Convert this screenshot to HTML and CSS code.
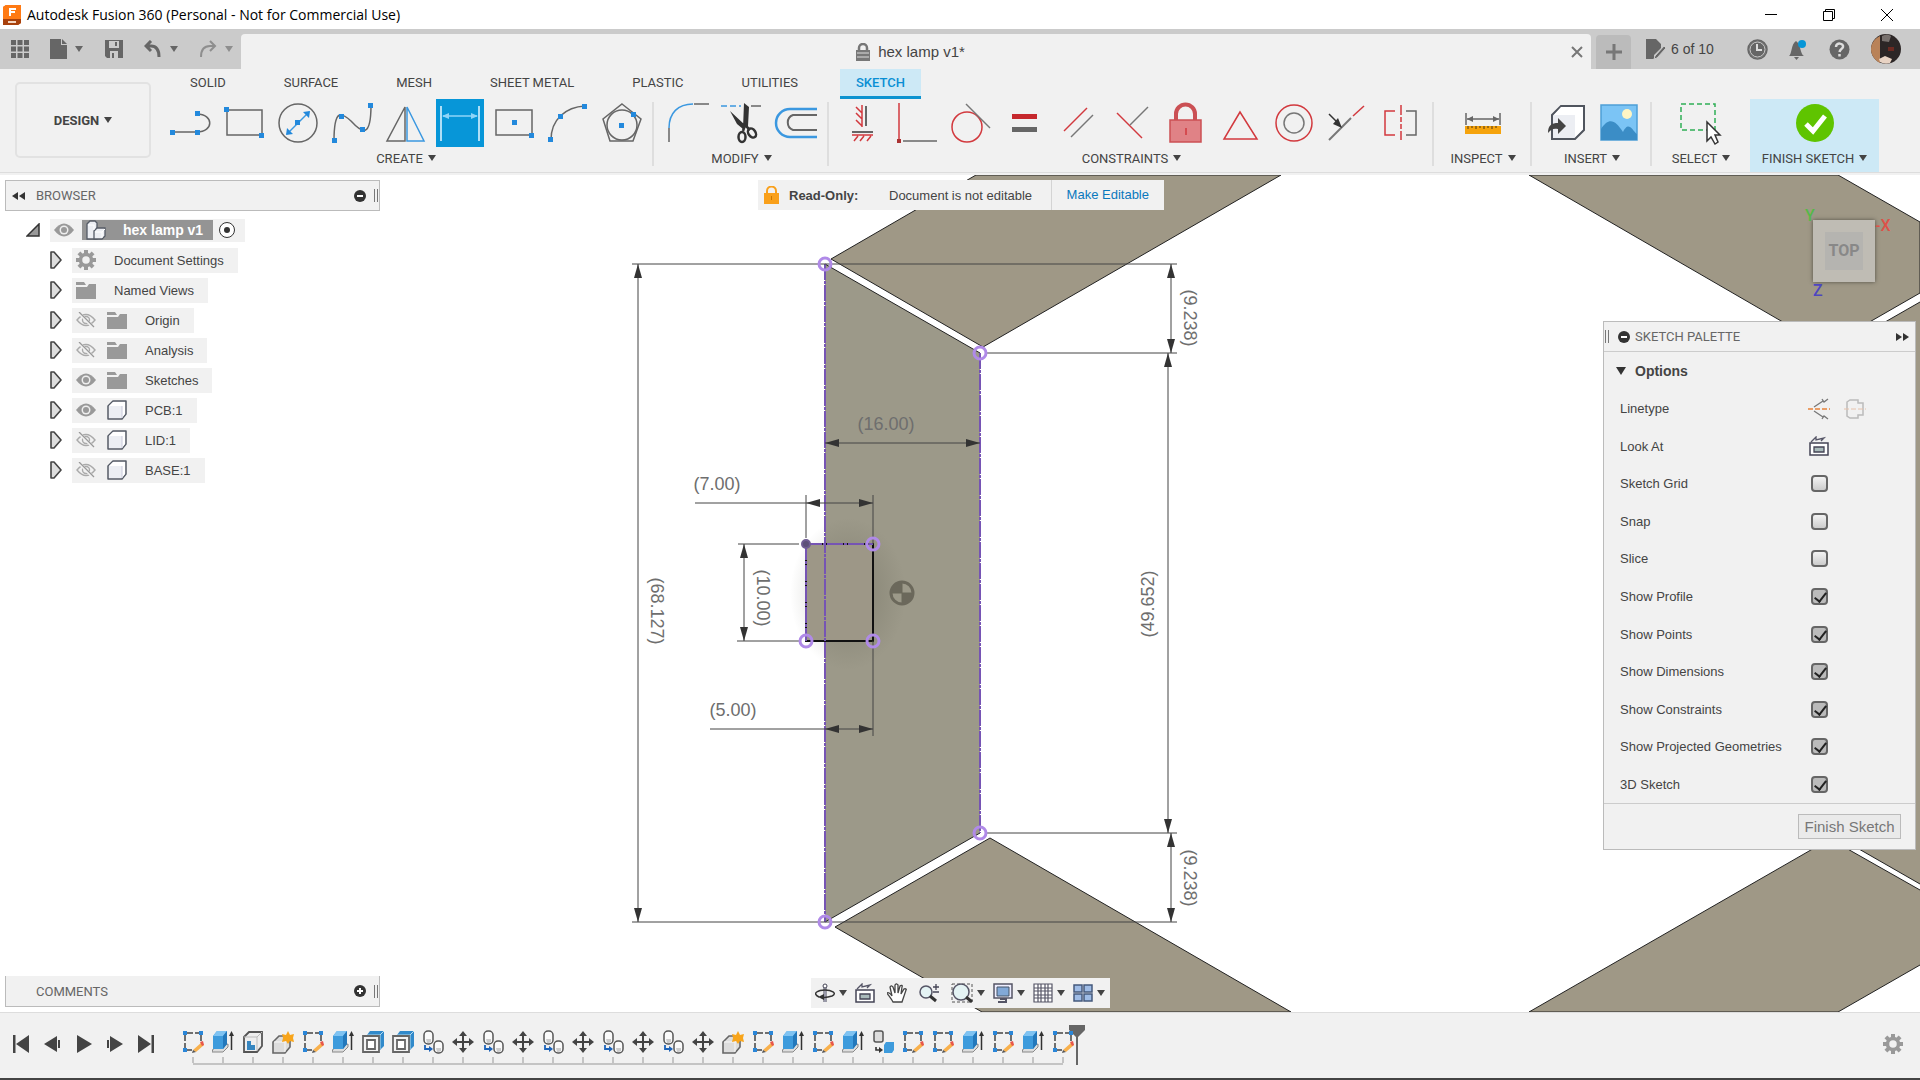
FILE: index.html
```
<!DOCTYPE html>
<html lang="en">
<head>
  <meta charset="utf-8">
  <meta name="viewport" content="width=device-width, initial-scale=1">
  <title>Autodesk Fusion 360</title>
  <link rel="stylesheet" href="styles.css">
</head>
<body>
  <!-- shared icons -->
  <svg class="defs" aria-hidden="true">
    <symbol id="eye" viewBox="0 0 20 16"><path d="M0 8Q10-5 20 8Q10 21 0 8Z" fill="#999"/><circle cx="10" cy="8" r="4.5" fill="#eee"/><circle cx="10" cy="8" r="3" fill="#999"/></symbol>
    <symbol id="eye-off" viewBox="0 0 20 16"><path d="M1 8Q10-3 19 8Q10 19 1 8Z" fill="none" stroke="#aaa" stroke-width="1.4"/><circle cx="10" cy="8" r="3.5" fill="none" stroke="#aaa" stroke-width="1.4"/><path d="M2 0L18 16" stroke="#f1f1f1" stroke-width="3"/><path d="M3 0L18 15" stroke="#999" stroke-width="1.3"/></symbol>
    <symbol id="folder" viewBox="0 0 20 17"><path d="M0 0h8l2 3H0zM0 5h11l2-3h7v15H0z" fill="#999"/></symbol>
    <symbol id="body" viewBox="0 0 20 20"><path d="M1 6l5-5h13v13l-4 5H1z" fill="#eceef3" stroke="#555b66" stroke-width="1.5" stroke-linejoin="round"/><path d="M15 6v12l3-4V2zM2 6h13l3-4H6z" fill="#fff"/><path d="M15 6v12" stroke="#ccd" /></symbol>
    <symbol id="expand" viewBox="0 0 12 18"><path d="M1 1h3l7 8-7 8H1z" fill="#ddd" stroke="#444" stroke-width="1.6" stroke-linejoin="round"/></symbol>
    <symbol id="gear" viewBox="0 0 20 20"><g fill="#999"><path d="M8 0h4v20H8z"/><path d="M8 0h4v20H8z" transform="rotate(45 10 10)"/><path d="M8 0h4v20H8z" transform="rotate(90 10 10)"/><path d="M8 0h4v20H8z" transform="rotate(135 10 10)"/></g><circle cx="10" cy="10" r="5.5" fill="#f1f1f1" stroke="#999" stroke-width="3.5"/></symbol>
    <symbol id="look" viewBox="0 0 20 20"><path d="M1 7h18v12H1z" fill="#fff" stroke="#445" stroke-width="1.5"/><path d="M5 11h10v5H5z" fill="#abb" stroke="#445" stroke-width="1.3"/><path d="M2 6l5-5v3l8-2-3 3" fill="none" stroke="#556" stroke-width="1.3"/></symbol>
    <symbol id="sketch" viewBox="0 0 22 24"><path d="M3 3h16M3 3v17M19 3v9M3 20h7" fill="none" stroke="#444" stroke-width="1.5" stroke-dasharray="8 2"/><path d="M1 1h4v4H1zM17 1h4v4h-4zM1 18h4v4H1z" fill="#2a86d8"/><path d="M20 12l2 3-8 7-3-2z" fill="#f8b04c"/><path d="M18 12l3-1 1 4-2 1z" fill="#e8564a"/><path d="M11 20l3 2-4 1z" fill="#555"/></symbol>
    <symbol id="extrude" viewBox="0 0 22 24"><path d="M1 19l-1 3h11l5-5v-3z" fill="#ddd" stroke="#888"/><path d="M1 6l4-5h10v13l-4 5H1z" fill="#3e9bdc"/><path d="M1 6h10l4-5H5z" fill="#7fc3f2"/><path d="M11 6l4-5v13l-4 5z" fill="#2378bb"/><path d="M19.500 20V5" stroke="#333" stroke-width="1.5"/><path d="M17 6l2.500-5L22 6z" fill="#333"/></symbol>
    <symbol id="cutbox" viewBox="0 0 22 24"><path d="M2 7l5-5h13v14l-5 6H2z" fill="#eee" stroke="#555" stroke-width="1.8"/><path d="M2 7h13v14M15 7l5-5" fill="none" stroke="#bbb"/><path d="M5 11h4v4h4v5H5z" fill="#3686c0"/></symbol>
    <symbol id="newbody" viewBox="0 0 22 24"><path d="M1 12l6-6h6l5 4v7l-5 6H1z" fill="#ddd" stroke="#666" stroke-width="1.6"/><path d="M2 12h11l5-2M13 12v10" fill="none" stroke="#f8f8f8"/><path d="M16 1l2 4 4-1-1 4 1 4-4-1-2 3-2-3-4 1 1-4-1-4 4 1z" fill="#f8a51b"/></symbol>
    <symbol id="shell" viewBox="0 0 22 24"><path d="M5 5l3-4h14v15l-4 4z" fill="#318acb"/><path d="M5 5h13v14M18 5l4-4" fill="none" stroke="#bde" /><path d="M1 6h16v16H1z" fill="#f3f3f3" stroke="#666" stroke-width="1.8"/><path d="M5 10h8v9H5z" fill="#fff" stroke="#666" stroke-width="1.8"/></symbol>
    <symbol id="copy" viewBox="0 0 22 24"><g fill="#fafafa" stroke="#555" stroke-width="1.5"><rect x="2" y="1" width="9" height="13" rx="4"/><rect x="12" y="11" width="9" height="12" rx="4"/></g><path d="M4 9h5v3l-2 1H5zM14 18h5v3l-2 1h-2z" fill="#ccc"/><path d="M3 15v4h5" fill="none" stroke="#1d63b8" stroke-width="1.8"/><path d="M7 16l4 3-4 3z" fill="#1d63b8"/></symbol>
    <symbol id="copyblue" viewBox="0 0 22 24"><rect x="2" y="1" width="9" height="11" rx="2" fill="#ddd" stroke="#555" stroke-width="1.5"/><path d="M12 15l2-3h8v8l-2 3h-8z" fill="#3e9bdc"/><path d="M4 17v3h3" fill="none" stroke="#333" stroke-width="1.6"/><path d="M7 17l4 3-4 3z" fill="#333"/></symbol>
    <symbol id="move" viewBox="0 0 22 24"><path d="M11 3v18M2 12h18" stroke="#444" stroke-width="2"/><path d="M11 1l4 5H7zM11 23l4-5H7zM0 12l5-4v8zM22 12l-5-4v8z" fill="#444"/></symbol>
  </svg>

  <header class="titlebar">
    <svg class="app-icon" width="18" height="20" viewBox="0 0 18 20"><path d="M0 2l3-2h15v18l-3 2H0z" fill="#f0660c"/><path d="M0 2l3-2h15v14H0z" fill="#ff7a14"/><path d="M0 14h18v4l-3 2H0z" fill="#a8410c"/><path d="M7 11V4h6M7 7h5" fill="none" stroke="#fff" stroke-width="2"/><path d="M5 17h8" stroke="#f5d6c0" stroke-width="2"/></svg>
    <h1>Autodesk Fusion 360 (Personal - Not for Commercial Use)</h1>
    <div class="window-buttons">
      <button aria-label="Minimize"><svg width="14" height="14"><path d="M1 6.500h12" stroke="#000"/></svg></button>
      <button aria-label="Restore"><svg width="14" height="14"><path d="M1.500 3.500h9v9h-9zM3.500 3V1.500h9v9H11" fill="none" stroke="#000"/></svg></button>
      <button aria-label="Close"><svg width="14" height="14"><path d="M1 1l12 12M13 1L1 13" stroke="#000"/></svg></button>
    </div>
  </header>

  <div class="docbar">
    <div class="quick">
      <button aria-label="Data panel"><svg width="18" height="18" viewBox="0 0 18 18"><path d="M0 0h5v5H0zM6.500 0h5v5h-5zM13 0h5v5h-5zM0 6.500h5v5H0zM6.500 6.500h5v5h-5zM13 6.500h5v5h-5zM0 13h5v5H0zM6.500 13h5v5h-5zM13 13h5v5h-5z" fill="#666"/></svg></button>
      <button aria-label="File"><svg width="17" height="20" viewBox="0 0 17 20"><path d="M0 0h11v6h6v14H0z" fill="#666"/><path d="M12 0l5 5h-5z" fill="#666"/></svg><i class="caret"></i></button>
      <button aria-label="Save"><svg width="18" height="18" viewBox="0 0 18 18"><path d="M0 0h18v18H2l-2-2z" fill="#666"/><path d="M4 1h10v7H4zM5 11h8v7H5z" fill="#cbcbcb"/><path d="M10 2h2v4h-2zM7 13h2v5H7z" fill="#666"/></svg></button>
      <button aria-label="Undo"><svg width="18" height="18" viewBox="0 0 18 18"><path d="M7 1L2 6l5 5M2 6h5c6 0 8 4 8 11" fill="none" stroke="#666" stroke-width="3"/></svg><i class="caret"></i></button>
      <button class="faded" aria-label="Redo"><svg width="18" height="18" viewBox="0 0 18 18"><path d="M11 1l5 5-5 5M16 6h-5C5 6 2 10 2 17" fill="none" stroke="#666" stroke-width="2"/></svg><i class="caret"></i></button>
    </div>
    <div class="doc-tab">
      <span class="doc-name"><svg width="16" height="18" viewBox="0 0 16 18"><path d="M4 8V5a4 4 0 0 1 8 0v3" fill="none" stroke="#777" stroke-width="2.500"/><path d="M1 7h14v11H1z" fill="#777"/><path d="M2 10h12M2 14h12" stroke="#ddd"/></svg>hex lamp v1*</span>
      <button aria-label="Close document"><svg width="12" height="12"><path d="M1 1l10 10M11 1L1 11" stroke="#777" stroke-width="2"/></svg></button>
    </div>
    <button class="new-tab" aria-label="New document"><svg width="16" height="16"><path d="M8 0v16M0 8h16" stroke="#777" stroke-width="3"/></svg></button>
    <div class="account">
      <button class="docs-left"><svg width="20" height="20" viewBox="0 0 20 20"><path d="M0 0h10l5 5v4l-7 7v4H0z" fill="#666"/><path d="M18 7l2 2-9 10-3 1 1-3z" fill="#666" stroke="#cbcbcb"/></svg>6 of 10</button>
      <button aria-label="Job status"><svg width="21" height="21" viewBox="0 0 21 21"><circle cx="10.500" cy="10.500" r="8.500" fill="#666" stroke="#666"/><circle cx="10.500" cy="10.500" r="7.500" fill="none" stroke="#ccc"/><circle cx="10.500" cy="10.500" r="9.500" fill="none" stroke="#666" stroke-width="1.500"/><path d="M10 5v6h5" fill="none" stroke="#ddd" stroke-width="2"/></svg></button>
      <button aria-label="Notifications"><svg width="20" height="21" viewBox="0 0 20 21"><path d="M1 17c3-2 2-12 7-15 5 3 4 13 8 15z" fill="#666"/><path d="M6 18h5l-2.500 3z" fill="#666"/><circle cx="14" cy="5" r="4" fill="#0696d7"/></svg></button>
      <button aria-label="Help"><svg width="21" height="21" viewBox="0 0 21 21"><circle cx="10.500" cy="10.500" r="10" fill="#666"/><path d="M7 8c0-5 8-4 7 0-.5 2-3 2-3.500 5M10.500 15v2.500" fill="none" stroke="#ddd" stroke-width="2.500"/></svg></button>
      <button class="avatar" aria-label="Account"><svg width="30" height="30" viewBox="0 0 30 30"><circle cx="15" cy="15" r="15" fill="#2c2626"/><path d="M9 2C-3 8-3 22 9 29z" fill="#b98258"/><path d="M8 25l6-3 7 3-2 4q-5 2-10-1z" fill="#e8d3c4"/><path d="M11 2q5-3 9 0l-2 6-7-1z" fill="#78716e"/><path d="M17 13h6v4h-6z" fill="#6b2a22"/></svg></button>
    </div>
  </div>

  <div class="ribbon">
    <div class="workspace"><button>DESIGN<i class="caret"></i></button></div>
    <div class="ribbon-main">
      <nav class="tabs">
        <a href="#">SOLID</a>
        <a href="#">SURFACE</a>
        <a href="#">MESH</a>
        <a href="#">SHEET METAL</a>
        <a href="#">PLASTIC</a>
        <a href="#">UTILITIES</a>
        <a href="#" class="active">SKETCH</a>
      </nav>
      <div class="groups">
        <section class="group create">
          <div class="tools">
            <button aria-label="Line"><svg class="ico" viewBox="0 0 48 48"><path d="M6 33h25c17 0 17-18 0-18"/><path class="dot" d="M4 31h5v5H4zM29 31h5v5h-5zM29 12h5v5h-5z"/></svg></button>
            <button aria-label="Rectangle"><svg class="ico" viewBox="0 0 48 48"><path d="M7 11h35v25H7z"/><path class="dot" d="M4 8h5v5H4zM39 34h5v5h-5z"/></svg></button>
            <button aria-label="Circle"><svg class="ico" viewBox="0 0 48 48"><circle cx="24" cy="24" r="19"/><path class="blue" d="M13 35l22-22"/><path class="dot" d="M21 21h5v5h-5zM12 36l1-7 6 6zM36 12l-1 7-6-6z"/></svg></button>
            <button aria-label="Spline"><svg class="ico" viewBox="0 0 48 48"><path d="M6 42C6 8 14 14 23 22C34 34 43 40 43 6"/><path class="dot" d="M4 39h5v5H4zM11 15h5v5h-5zM32 28h5v5h-5zM40 4h5v5h-5z"/></svg></button>
            <button aria-label="Mirror"><svg class="ico" viewBox="0 0 48 48"><path d="M23 8v34H5z"/><path class="blue" d="M25 8v34h17z"/></svg></button>
            <button class="on" aria-label="Sketch Dimension"><svg class="ico" viewBox="0 0 48 48"><path class="white" d="M5 7v35M43 7v35"/><path class="sky" d="M7 17h34"/><path class="skyfill" d="M6 17l7-3v6zM42 17l-7-3v6z"/></svg></button>
            <button aria-label="Center Rectangle"><svg class="ico" viewBox="0 0 48 48"><path d="M6 11h36v25H6z"/><path class="dot" d="M22 21h5v5h-5zM39 34h5v5h-5z"/></svg></button>
            <button aria-label="Arc"><svg class="ico" viewBox="0 0 48 48"><path d="M7 41C7 20 22 8 41 7"/><path class="dot" d="M4 38h5v5H4zM14 15h5v5h-5zM38 5h5v5h-5z"/></svg></button>
            <button aria-label="Polygon"><svg class="ico" viewBox="0 0 48 48"><path d="M24 5l19 15-8 22H12L5 20z"/><circle cx="24" cy="26" r="15"/><path class="dot" d="M21 24h5v5h-5zM33 13h5v5h-5z"/></svg></button>
          </div>
          <button class="menu">CREATE<i class="caret"></i></button>
        </section>
        <section class="group modify">
          <div class="tools">
            <button aria-label="Fillet"><svg class="ico" viewBox="0 0 48 48"><path d="M5 43V29M30 5h15"/><path class="blue" d="M5 29C5 14 14 5 29 5"/></svg></button>
            <button aria-label="Trim"><svg class="ico" viewBox="0 0 48 48"><path class="blue" stroke-dasharray="6 3" d="M3 7h20"/><path d="M33 7h10"/><path d="M26 4l5 4-1 19-5 2zM12 12l15 14-2 4-6-5z" fill="#333" stroke="none"/><g stroke="#333" stroke-width="2.500"><path d="M27 26l-2 6M27 26l5 5"/><ellipse cx="24" cy="38" rx="3.500" ry="5"/><ellipse cx="34" cy="34" rx="3.500" ry="5" transform="rotate(-35 34 34)"/></g></svg></button>
            <button aria-label="Offset"><svg class="ico" viewBox="0 0 48 48"><path class="blue" stroke-width="2.500" d="M45 10H18a14 14 0 0 0 0 28h27"/><path stroke-width="2" d="M45 16H21a8 8 0 0 0 0 15h24"/></svg></button>
          </div>
          <button class="menu">MODIFY<i class="caret"></i></button>
        </section>
        <section class="group constraints">
          <div class="tools">
            <button aria-label="Horizontal/Vertical"><svg class="ico" viewBox="0 0 48 48"><path stroke-width="2" d="M28 7v20M14 33h21"/><path class="red" d="M24 6v22M18 8l6 6M18 14l6 6M18 21l6 6M14 36h21M16 42l4-5M22 42l4-5M29 42l4-5"/></svg></button>
            <button aria-label="Coincident"><svg class="ico" viewBox="0 0 48 48"><path d="M11 42h34"/><path class="red" d="M7 4v38"/><path d="M5 40h4v4H5z" fill="#a33" stroke="none"/></svg></button>
            <button aria-label="Tangent"><svg class="ico" viewBox="0 0 48 48"><circle class="red" cx="21" cy="28" r="15"/><path class="grey" d="M20 5l24 24"/></svg></button>
            <button aria-label="Equal"><svg class="ico" viewBox="0 0 48 48"><path d="M12 15h25v5H12z" fill="#c6282d" stroke="none"/><path d="M12 28h25v5H12z" fill="#666" stroke="none"/></svg></button>
            <button aria-label="Parallel"><svg class="ico" viewBox="0 0 48 48"><path class="red" d="M10 32L33 9"/><path class="grey" d="M17 38l22-22"/></svg></button>
            <button aria-label="Perpendicular"><svg class="ico" viewBox="0 0 48 48"><path class="red" d="M9 14l25 25"/><path class="grey" d="M22 26L40 8"/></svg></button>
            <button aria-label="Fix"><svg class="ico" viewBox="0 0 48 48"><path class="shackle" d="M14 21v-6a9 9 0 0 1 19 0v6"/><path d="M8 21h31v22H8z" fill="#e08286" stroke="#cb5054"/><path class="red" d="M24 29v7"/></svg></button>
            <button aria-label="Midpoint"><svg class="ico" viewBox="0 0 48 48"><path class="red" d="M24 13L8 40h33z"/></svg></button>
            <button aria-label="Concentric"><svg class="ico" viewBox="0 0 48 48"><circle class="red" cx="24" cy="24" r="18"/><circle class="grey" cx="24" cy="24" r="10"/></svg></button>
            <button aria-label="Collinear"><svg class="ico" viewBox="0 0 48 48"><path class="grey" stroke-width="2" d="M5 41l22-22"/><path class="red" d="M29 17L40 7"/><path stroke="#333" d="M5 15l10 10"/><path d="M18 29l-9-4 5-6z" fill="#333" stroke="none"/></svg></button>
            <button aria-label="Symmetry"><svg class="ico" viewBox="0 0 48 48"><path class="red" d="M17 12H7v24h10M23 6v10M23 18v5M23 25v5M23 32v9"/><path d="M28 12h10v24H28"/></svg></button>
          </div>
          <button class="menu">CONSTRAINTS<i class="caret"></i></button>
        </section>
        <section class="group inspect">
          <div class="tools">
            <button aria-label="Measure"><svg class="ico" viewBox="0 0 48 48"><path d="M7 14v12M41 14v12M8 20h32"/><path d="M8 20l6-3v6zM40 20l-6-3v6z" fill="#666" stroke="none"/><path d="M6 27h36v8H6z" fill="#f5a30c" stroke="none"/><path stroke="#855b10" d="M9 27v3M13 27v2M17 27v3M21 27v2M25 27v3M29 27v2M33 27v3M37 27v2"/></svg></button>
          </div>
          <button class="menu">INSPECT<i class="caret"></i></button>
        </section>
        <section class="group insert">
          <div class="tools">
            <button aria-label="Insert Derive"><svg class="ico" viewBox="0 0 48 48"><path d="M11 16l9-9h23v24l-9 9H11z" fill="#eceef3" stroke="#50555e" stroke-width="2"/><path d="M34 16l8-8v22l-8 8zM13 16h21l8-8H20z" fill="#fff" stroke="none"/><path d="M7 34c0-8 4-10 10-10v-5l8 8-8 8v-5c-4-1-7 0-10 4z" fill="#444" stroke="none"/></svg></button>
            <button aria-label="Canvas"><svg class="ico" viewBox="0 0 48 48"><path d="M6 6h36v35H6z" fill="#7bc4f5" stroke="#4e9fd6"/><path d="M6 30c8-12 14-9 22 3 3-6 5-6 7-5 3 2 5 6 7 7v6H6z" fill="#3b8dc6" stroke="none"/><circle cx="32" cy="15" r="5" fill="#fff5c4" stroke="none"/></svg></button>
          </div>
          <button class="menu">INSERT<i class="caret"></i></button>
        </section>
        <section class="group select">
          <div class="tools">
            <button aria-label="Select"><svg class="ico" viewBox="0 0 48 48"><path d="M4 5h34v26H4z" stroke="#2fae55" stroke-dasharray="5 3"/><path d="M30 23v19l4-4 4 7 3-2-3-7h5z" fill="#fff" stroke="#333"/></svg></button>
          </div>
          <button class="menu">SELECT<i class="caret"></i></button>
        </section>
        <section class="group finish">
          <div class="tools">
            <button aria-label="Finish"><svg class="ico" viewBox="0 0 48 48"><circle cx="24" cy="24" r="19" fill="#5fc400" stroke="none"/><path class="tick" d="M15 25l7 7 12-15"/></svg></button>
          </div>
          <button class="menu">FINISH SKETCH<i class="caret"></i></button>
        </section>
      </div>
    </div>
  </div>

  <main class="canvas">
    <svg class="drawing" viewBox="0 175 1920 837" preserveAspectRatio="xMidYMid slice">
      <defs>
        <marker id="arrow" viewBox="0 0 14 8" refX="14" refY="4" markerWidth="14" markerHeight="8" markerUnits="userSpaceOnUse" orient="auto-start-reverse"><path d="M0 0l14 4-14 4z" fill="#333"/></marker>
        <radialGradient id="shade"><stop offset="0" stop-color="#4a4a3c" stop-opacity=".3"/><stop offset="1" stop-color="#4a4a3c" stop-opacity="0"/></radialGradient>
      </defs>
      <g class="solid">
        <path d="M831 259L976 175H1281L983 347Z"/>
        <path d="M990 838L835 927L982 1012H1291Z"/>
        <path d="M1529 175H1838L1920 222V293L1826 347Z"/>
        <path d="M1920 302L1831 353V833L1920 884"/>
        <path d="M1920 890L1830 839L1529 1012H1838L1920 965"/>
      </g>
      <path class="profile" d="M825 264L980 353V833L825 922Z"/>
      <path class="edge" d="M825 264L980 353M980 833L825 922"/>
      <ellipse cx="848" cy="594" rx="58" ry="76" fill="url(#shade)"/>
      <path class="chip" d="M806 544H873V641H806Z"/>
      <path class="projected" d="M825 264V922M980 353V833M806 544V641M806 544H873"/>
      <g class="ext">
        <path d="M632 264H1177M632 922H1177M986 353H1177M986 833H1177M806 495V538M873 495V544M738 544H799M737 641H799M873 641V736M695 503H806M710 729H825"/>
      </g>
      <g class="dim">
        <path d="M638 264V922"/>
        <path d="M1171 264V353"/>
        <path d="M1168 353V833"/>
        <path d="M1171 833V922"/>
        <path d="M825 443H980"/>
        <path d="M806 503H873"/>
        <path d="M744 544V641"/>
        <path d="M825 729H873"/>
      </g>
      <g class="points">
        <circle cx="825" cy="264" r="6"/><circle cx="980" cy="353" r="6"/><circle cx="980" cy="833" r="6"/><circle cx="825" cy="922" r="6"/>
        <circle cx="873" cy="544" r="6"/><circle cx="806" cy="641" r="6"/><circle cx="873" cy="641" r="6"/>
        <circle cx="806" cy="544" r="4" class="fixed"/>
      </g>
      <g class="centroid"><circle cx="902" cy="593" r="11"/><path d="M902 593V583A10 10 0 0 0 892 593ZM902 593V603A10 10 0 0 0 912 593Z"/></g>
      <g class="labels">
        <text x="886" y="430">(16.00)</text>
        <text x="717" y="490">(7.00)</text>
        <text x="733" y="716">(5.00)</text>
        <text transform="translate(651 611) rotate(90)">(68.127)</text>
        <text transform="translate(757 598) rotate(90)">(10.00)</text>
        <text transform="translate(1154 604) rotate(-90)">(49.652)</text>
        <text transform="translate(1184 318) rotate(90)">(9.238)</text>
        <text transform="translate(1184 878) rotate(90)">(9.238)</text>
      </g>
    </svg>

    <aside class="browser">
      <div class="panel-head">
        <svg width="13" height="8"><path d="M6 0v8L0 4zM13 0v8L7 4z" fill="#333"/></svg>
        <h2>BROWSER</h2>
        <svg width="12" height="12"><circle cx="6" cy="6" r="6" fill="#333"/><path d="M3 6h6" stroke="#fff" stroke-width="2"/></svg>
        <span class="grip"></span>
      </div>
      <ul class="tree">
        <li class="root"><svg width="14" height="14"><path d="M13 1v12H1z" fill="#999" stroke="#333" stroke-width="1.500"/></svg>
          <div class="node"><svg width="20" height="16"><use href="#eye"/></svg><span class="current"><svg width="20" height="20" viewBox="0 0 20 20"><g fill="#eceef3" stroke="#555b66" stroke-width="1.300"><path d="M1 4l3-3h5l2 2v16H1z"/><path d="M8 11l3-3h8v8l-3 3H8z"/></g><path d="M9 12h7v6M16 12l3-3M2 5h6v5" fill="none" stroke="#fff"/></svg>hex lamp v1</span><svg width="18" height="18"><circle cx="9" cy="9" r="7.500" fill="#fff" stroke="#333"/><circle cx="9" cy="9" r="3" fill="#333"/></svg></div></li>
        <li><svg width="12" height="18"><use href="#expand"/></svg><div class="node"><svg width="20" height="20"><use href="#gear"/></svg><span>Document Settings</span></div></li>
        <li><svg width="12" height="18"><use href="#expand"/></svg><div class="node"><svg width="20" height="17"><use href="#folder"/></svg><span>Named Views</span></div></li>
        <li><svg width="12" height="18"><use href="#expand"/></svg><div class="node"><svg width="20" height="16"><use href="#eye-off"/></svg><svg width="20" height="17"><use href="#folder"/></svg><span>Origin</span></div></li>
        <li><svg width="12" height="18"><use href="#expand"/></svg><div class="node"><svg width="20" height="16"><use href="#eye-off"/></svg><svg width="20" height="17"><use href="#folder"/></svg><span>Analysis</span></div></li>
        <li><svg width="12" height="18"><use href="#expand"/></svg><div class="node"><svg width="20" height="16"><use href="#eye"/></svg><svg width="20" height="17"><use href="#folder"/></svg><span>Sketches</span></div></li>
        <li><svg width="12" height="18"><use href="#expand"/></svg><div class="node"><svg width="20" height="16"><use href="#eye"/></svg><svg width="20" height="20"><use href="#body"/></svg><span>PCB:1</span></div></li>
        <li><svg width="12" height="18"><use href="#expand"/></svg><div class="node"><svg width="20" height="16"><use href="#eye-off"/></svg><svg width="20" height="20"><use href="#body"/></svg><span>LID:1</span></div></li>
        <li><svg width="12" height="18"><use href="#expand"/></svg><div class="node"><svg width="20" height="16"><use href="#eye-off"/></svg><svg width="20" height="20"><use href="#body"/></svg><span>BASE:1</span></div></li>
      </ul>
    </aside>

    <div class="notice">
      <svg width="15" height="18" viewBox="0 0 15 18"><path d="M3 8V5a4 4 0 0 1 9 0v3" fill="none" stroke="#f9a01b" stroke-width="2"/><path d="M0 7h15v11H0z" fill="#f9a01b"/><path d="M7.500 10v4" stroke="#c87800"/></svg>
      <strong>Read-Only:</strong>
      <span>Document is not editable</span>
      <a href="#">Make Editable</a>
    </div>

    <div class="viewcube">
      <span class="face">TOP</span>
      <span class="axis x">-X</span>
      <span class="axis y">Y</span>
      <span class="axis z">Z</span>
    </div>

    <aside class="palette">
      <div class="panel-head">
        <span class="grip"></span>
        <svg width="12" height="12"><circle cx="6" cy="6" r="6" fill="#333"/><path d="M3 6h6" stroke="#fff" stroke-width="2"/></svg>
        <h2>SKETCH PALETTE</h2>
        <svg width="13" height="8"><path d="M0 0v8l6-4zM7 0v8l6-4z" fill="#333"/></svg>
      </div>
      <h3><svg width="10" height="8"><path d="M0 0h10L5 8z" fill="#333"/></svg>Options</h3>
      <div class="options">
        <div class="option"><span>Linetype</span>
          <button aria-label="Construction"><svg width="22" height="22" viewBox="0 0 22 22"><path d="M6 9l9-6M6 13l9 6M14 1l2 3 4-3M14 21l2-3 4 3" stroke="#777" stroke-width="1.300" fill="none"/><path d="M0 11h22" stroke="#e8833a" stroke-width="1.500" stroke-dasharray="5 2"/></svg></button>
          <button aria-label="Centerline"><svg width="22" height="22" viewBox="0 0 22 22"><path d="M3 4l3-2h8v3h5v12h-5v3H6l-3-2z" fill="none" stroke="#bbb" stroke-width="1.500"/><path d="M0 11h22" stroke="#e6c2ac" stroke-dasharray="5 2"/></svg></button></div>
        <div class="option"><span>Look At</span><button aria-label="Look At"><svg width="20" height="20"><use href="#look"/></svg></button></div>
        <div class="option"><label for="grid">Sketch Grid</label><input type="checkbox" id="grid"></div>
        <div class="option"><label for="snap">Snap</label><input type="checkbox" id="snap"></div>
        <div class="option"><label for="slice">Slice</label><input type="checkbox" id="slice"></div>
        <div class="option"><label for="profile">Show Profile</label><input type="checkbox" id="profile" checked></div>
        <div class="option"><label for="points">Show Points</label><input type="checkbox" id="points" checked></div>
        <div class="option"><label for="dims">Show Dimensions</label><input type="checkbox" id="dims" checked></div>
        <div class="option"><label for="constr">Show Constraints</label><input type="checkbox" id="constr" checked></div>
        <div class="option"><label for="proj">Show Projected Geometries</label><input type="checkbox" id="proj" checked></div>
        <div class="option"><label for="sk3d">3D Sketch</label><input type="checkbox" id="sk3d" checked></div>
      </div>
      <div class="palette-foot"><button>Finish Sketch</button></div>
    </aside>

    <aside class="comments">
      <div class="panel-head">
        <h2>COMMENTS</h2>
        <svg width="12" height="12"><circle cx="6" cy="6" r="6" fill="#333"/><path d="M3 6h6M6 3v6" stroke="#fff" stroke-width="2"/></svg>
        <span class="grip"></span>
      </div>
    </aside>

    <div class="navbar">
      <button aria-label="Orbit"><svg width="20" height="20" viewBox="0 0 20 20"><path d="M10 2v17" stroke="#445" stroke-width="3"/><path d="M10 2v17" stroke="#eef"/><circle cx="10" cy="3" r="2" fill="#fff" stroke="#445"/><path d="M4 14C-4 10 4 7 10 7s13 3 7 6c-3 1-7 2-11 1" fill="none" stroke="#333" stroke-width="1.500"/><path d="M9 11v6l-6-3z" fill="#333"/></svg><i class="caret"></i></button>
      <button class="plain" aria-label="Look At"><svg width="20" height="20"><use href="#look"/></svg></button>
      <button class="plain" aria-label="Pan"><svg width="20" height="20" viewBox="0 0 20 20"><path d="M6 19C4 15 2 13 0 10c1-1 3 0 5 3L3 4c1-2 2-1 3 0l2 6V2c1-2 2-1 3 0v8l2-7c1-1 3-1 2 1l-1 7 3-5c1-1 3 0 2 1l-4 12z" fill="#fff" stroke="#444" stroke-width="1.300"/></svg></button>
      <button class="plain" aria-label="Zoom"><svg width="20" height="20" viewBox="0 0 20 20"><circle cx="7" cy="9" r="6" fill="#e4f3f4" stroke="#556" stroke-width="1.500"/><path d="M11 13l6 5" stroke="#333" stroke-width="3"/><path d="M14 4h6M17 1v6M14 9h6" stroke="#445" stroke-width="1.300"/></svg></button>
      <button aria-label="Zoom Window"><svg width="22" height="20" viewBox="0 0 22 20"><path d="M1 1h20v18H1z" fill="none" stroke="#555" stroke-dasharray="3 2"/><circle cx="10" cy="9" r="8" fill="#e4f3f4" stroke="#556" stroke-width="1.500"/><path d="M15 14l6 5" stroke="#333" stroke-width="3"/></svg><i class="caret"></i></button>
      <button aria-label="Display Settings"><svg width="20" height="20" viewBox="0 0 20 20"><path d="M1 1h18v14H1z" fill="#eef" stroke="#556" stroke-width="1.500"/><path d="M4 4h12v9H4z" fill="#82a9d8" stroke="#456"/><path d="M7 16h6v3H5" fill="none" stroke="#556" stroke-width="2"/></svg><i class="caret"></i></button>
      <button aria-label="Grid and Snaps"><svg width="20" height="20" viewBox="0 0 20 20"><path d="M1 1h18v18H1zM1 5h18M1 8h18M1 12h18M1 15h18M5 1v18M8 1v18M12 1v18M15 1v18" fill="#fff" stroke="#556" stroke-width="1.200"/></svg><i class="caret"></i></button>
      <button aria-label="Viewports"><svg width="20" height="18" viewBox="0 0 20 18"><path d="M1 1h8v7H1zM11 1h8v7h-8zM1 10h8v7H1zM11 10h8v7h-8z" fill="#9fbce6" stroke="#46597c" stroke-width="1.500"/></svg><i class="caret"></i></button>
    </div>
  </main>

  <footer class="timeline">
    <div class="playback">
      <button aria-label="Go to start"><svg width="16" height="18"><path d="M1 0v18" stroke="#444" stroke-width="3"/><path d="M16 0v18L3 9z" fill="#444"/></svg></button>
      <button aria-label="Step back"><svg width="16" height="18"><path d="M13 1v16L0 9z" fill="#444"/><path d="M15 5v8" stroke="#444" stroke-width="2"/></svg></button>
      <button aria-label="Play"><svg width="16" height="18"><path d="M1 0v18l15-9z" fill="#444"/></svg></button>
      <button aria-label="Step forward"><svg width="16" height="18"><path d="M3 1v16l13-8z" fill="#444"/><path d="M1 5v8" stroke="#444" stroke-width="2"/></svg></button>
      <button aria-label="Go to end"><svg width="16" height="18"><path d="M15 0v18" stroke="#444" stroke-width="3"/><path d="M0 0v18l13-9z" fill="#444"/></svg></button>
    </div>
    <ol class="history">
      <li><svg><use href="#sketch"/></svg></li>
      <li><svg><use href="#extrude"/></svg></li>
      <li><svg><use href="#cutbox"/></svg></li>
      <li><svg><use href="#newbody"/></svg></li>
      <li><svg><use href="#sketch"/></svg></li>
      <li><svg><use href="#extrude"/></svg></li>
      <li><svg><use href="#shell"/></svg></li>
      <li><svg><use href="#shell"/></svg></li>
      <li><svg><use href="#copy"/></svg></li>
      <li><svg><use href="#move"/></svg></li>
      <li><svg><use href="#copy"/></svg></li>
      <li><svg><use href="#move"/></svg></li>
      <li><svg><use href="#copy"/></svg></li>
      <li><svg><use href="#move"/></svg></li>
      <li><svg><use href="#copy"/></svg></li>
      <li><svg><use href="#move"/></svg></li>
      <li><svg><use href="#copy"/></svg></li>
      <li><svg><use href="#move"/></svg></li>
      <li><svg><use href="#newbody"/></svg></li>
      <li><svg><use href="#sketch"/></svg></li>
      <li><svg><use href="#extrude"/></svg></li>
      <li><svg><use href="#sketch"/></svg></li>
      <li><svg><use href="#extrude"/></svg></li>
      <li><svg><use href="#copyblue"/></svg></li>
      <li><svg><use href="#sketch"/></svg></li>
      <li><svg><use href="#sketch"/></svg></li>
      <li><svg><use href="#extrude"/></svg></li>
      <li><svg><use href="#sketch"/></svg></li>
      <li><svg><use href="#extrude"/></svg></li>
      <li><svg><use href="#sketch"/></svg></li>
    </ol>
    <svg class="marker" width="16" height="40"><path d="M0 0h16v5L9 12v28H7V12L0 5z" fill="#666"/></svg>
    <button class="settings" aria-label="Timeline settings"><svg width="20" height="20"><use href="#gear"/></svg></button>
  </footer>
</body>
</html>
```
FILE: styles.css
```
* {
  box-sizing: border-box;
}

body {
  margin: 0;
  height: 100vh;
  display: flex;
  flex-direction: column;
  overflow: hidden;
  font-family: "Liberation Sans", Arial, sans-serif;
  font-size: 13px;
  color: #444;
  background: #f1f1f1;
}

button {
  font: inherit;
  color: inherit;
  background: none;
  border: none;
  padding: 0;
  display: flex;
  align-items: center;
  justify-content: center;
}

a {
  color: inherit;
  text-decoration: none;
}

h1, h2, h3, ul, ol {
  margin: 0;
  padding: 0;
  list-style: none;
}

svg {
  display: block;
  flex-shrink: 0;
}

.defs {
  position: absolute;
  width: 0;
  height: 0;
}

.caret {
  border: 4px solid transparent;
  border-top: 6px solid #444;
  border-bottom: 0;
  margin-left: 5px;
}

/* title bar */
.titlebar {
  height: 29px;
  background: #fff;
  display: flex;
  align-items: center;
  padding-left: 3px;
  gap: 6px;
}

.titlebar h1 {
  flex: 1;
  font: 400 14px "Open Sans", sans-serif;
  color: #000;
}

.window-buttons button {
  width: 58px;
  height: 28px;
}

.window-buttons {
  display: flex;
  padding-right: 4px;
}

/* document bar */
.docbar {
  height: 40px;
  background: #cbcbcb;
  display: flex;
}

.quick {
  width: 241px;
  padding: 0 8px 8px 11px;
  padding-bottom: 0;
  display: flex;
  align-items: center;
  justify-content: space-between;
}

.quick .caret {
  margin-left: 8px;
  border-top-color: #666;
}

.quick .faded {
  opacity: 0.6;
}

.doc-tab {
  flex: 1;
  margin-top: 5px;
  padding: 0 8px;
  background: #f1f1f1;
  border-radius: 4px 4px 0 0;
  display: flex;
  align-items: center;
}

.doc-name {
  flex: 1;
  display: flex;
  align-items: center;
  justify-content: center;
  gap: 7px;
  font-size: 15px;
}

.new-tab {
  width: 35px;
  margin: 6px 0 0 5px;
  background: #bbb;
  border-radius: 4px 4px 0 0;
}

.account {
  width: 289px;
  padding: 0 19px 0 15px;
  display: flex;
  align-items: center;
  justify-content: space-between;
}

.docs-left {
  gap: 5px;
  font-size: 14px;
  margin-right: 12px;
}

/* ribbon */
.ribbon {
  display: flex;
  padding-bottom: 2px;
  font-family: Roboto, sans-serif;
}

.workspace {
  width: 164px;
  padding: 13px 13px 14px 15px;
  display: flex;
  border-bottom: 1px solid #ddd;
}

.workspace button {
  flex: 1;
  border: 2px solid #e2e2e2;
  border-radius: 5px;
  font-weight: 700;
}

.ribbon-main {
  flex: 1;
  border-bottom: 1px solid #ddd;
}

.tabs {
  display: flex;
  gap: 26px;
  padding-left: 10px;
}

.tabs a {
  padding: 0 16px;
  line-height: 27px;
  border-bottom: 3px solid transparent;
}

.tabs .active {
  color: #0a8fd4;
  font-weight: 500;
  background: #cde9f6;
  border-bottom-color: #0c93d0;
}

.groups {
  display: flex;
}

.group {
  position: relative;
  height: 73px;
  display: flex;
  flex-direction: column;
  align-items: center;
}

.group:not(.select):not(.finish)::after {
  content: "";
  position: absolute;
  right: 0;
  top: 3px;
  bottom: 6px;
  width: 2px;
  background: #dedede;
}

.tools {
  display: flex;
}

.tools button {
  width: 54px;
  height: 48px;
}

.menu {
  height: 22px;
}

.create {
  width: 490px;
  padding-right: 6px;
}

.modify {
  width: 175px;
}

.constraints {
  width: 605px;
}

.inspect {
  width: 98px;
}

.insert {
  width: 120px;
}

.select {
  width: 98px;
}

.finish {
  width: 129px;
  background: #cde9f6;
}

.ico {
  width: 48px;
  height: 48px;
  fill: none;
  stroke: #666;
  stroke-width: 1.5px;
}

.on .ico {
  background: #0796d8;
}

.ico .dot {
  fill: #2389dc;
  stroke: none;
}

.ico .blue {
  stroke: #3b98e0;
}

.ico .red {
  stroke: #d2393e;
}

.ico .grey {
  stroke: #777;
}

.ico .white {
  stroke: #e6f6ff;
}

.ico .sky {
  stroke: #8fd4f8;
}

.ico .skyfill {
  fill: #8fd4f8;
  stroke: none;
}

.ico .shackle {
  stroke: #cb5054;
  stroke-width: 4px;
}

.ico .tick {
  stroke: #fff;
  stroke-width: 5px;
}

/* canvas */
.canvas {
  flex: 1;
  min-height: 0;
  position: relative;
  background: #fff;
  overflow: hidden;
}

.drawing {
  width: 100%;
  height: 100%;
}

.solid path {
  fill: #9f9886;
  stroke: #222;
}

.profile {
  fill: #9c9989;
}

.edge {
  stroke: #222;
}

.chip {
  fill: #9d9787;
  stroke: #111;
  stroke-width: 2px;
}

.projected {
  fill: none;
  stroke: #7654b4;
  stroke-width: 2px;
  stroke-dasharray: 16 1 3 1;
}

.ext {
  fill: none;
  stroke: #444;
}

.dim {
  stroke: #444;
}

.dim path {
  marker-start: url(#arrow);
  marker-end: url(#arrow);
}

.points {
  fill: none;
  stroke: #b08ae8;
  stroke-width: 3px;
}

.points .fixed {
  fill: #5d5078;
  stroke: #6f5c92;
  stroke-width: 2px;
}

.centroid {
  fill: #6b685b;
  stroke: #6b685b;
}

.centroid circle {
  fill: #9c9989;
  stroke-width: 3px;
}

.labels {
  font-size: 18px;
  text-anchor: middle;
  fill: #6e6e6e;
}

/* panels over the canvas */
.panel-head {
  height: 30px;
  display: flex;
  align-items: center;
}

.panel-head h2 {
  flex: 1;
  font: 400 13px Roboto, sans-serif;
  color: #666;
}

.grip {
  width: 4px;
  height: 13px;
  border: solid #777;
  border-width: 0 1px;
}

.browser {
  position: absolute;
  left: 5px;
  top: 5px;
  width: 375px;
}

.browser .panel-head,
.comments {
  background: #f1f1f1;
  border: 1px solid #bbb;
}

.browser .panel-head {
  height: 31px;
  padding: 0 1px 0 6px;
}

.browser h2 {
  padding-left: 11px;
}

.browser .grip,
.comments .grip {
  margin-left: 8px;
}

.tree {
  padding-top: 4px;
}

.tree li {
  height: 30px;
  padding-left: 45px;
  display: flex;
  align-items: center;
  gap: 10px;
}

.tree .root {
  padding-left: 21px;
}

.node {
  height: 25px;
  padding: 0 14px 0 4px;
  display: flex;
  align-items: center;
  gap: 11px;
  background: #f1f1f1;
}

.node span {
  margin-left: 7px;
}

.root .node {
  height: 23px;
  gap: 5px;
  padding-right: 9px;
}

.node .current {
  display: flex;
  align-items: center;
  gap: 17px;
  height: 20px;
  margin-left: 3px;
  padding: 0 10px 0 4px;
  background: #949494;
  color: #fff;
  font-size: 14px;
  font-weight: 700;
}

.notice {
  position: absolute;
  left: 50%;
  top: 5px;
  width: 406px;
  height: 30px;
  margin-left: -202px;
  padding-left: 6px;
  display: flex;
  align-items: center;
  background: #f1f1f1;
}

.notice strong {
  width: 100px;
  padding-left: 10px;
}

.notice span {
  flex: 1;
  padding-left: 10px;
}

.notice a {
  padding: 0 15px;
  line-height: 30px;
  color: #0a78bd;
  border-left: 1px solid #d4d4d4;
}

.viewcube {
  position: absolute;
  z-index: 1;
  right: 45px;
  top: 45px;
  width: 62px;
  height: 62px;
  padding: 12px;
  background: #bfbcb4;
  box-shadow: 0 0 4px rgba(0, 0, 0, 0.5);
}

.face {
  display: block;
  background: #b5b4b0;
  font: 700 16px/38px Roboto, sans-serif;
  text-align: center;
  color: #888;
}

.axis {
  position: absolute;
  font: 500 16px/16px Roboto, sans-serif;
  white-space: nowrap;
}

.axis.x {
  left: 62px;
  top: -2px;
  color: #dd5249;
}

.axis.y {
  left: -8px;
  top: -12px;
  color: #55b848;
}

.axis.z {
  left: 0;
  top: 63px;
  color: #4d46c0;
}

.palette {
  position: absolute;
  right: 4px;
  top: 146px;
  width: 313px;
  background: #f1f1f1;
  border: 1px solid #bbb;
}

.palette .panel-head {
  padding: 0 6px 0 1px;
  border-bottom: 1px solid #ccc;
}

.palette .panel-head h2 {
  padding-left: 5px;
}

.palette .grip {
  margin-right: 9px;
}

.palette h3 {
  display: flex;
  align-items: center;
  gap: 9px;
  height: 38px;
  padding-left: 12px;
  font-size: 14px;
}

.options {
  display: grid;
  grid-auto-rows: 1fr;
  min-height: 413px;
}

.option {
  display: grid;
  grid-template-columns: 181px 36px 36px;
  align-items: center;
  padding-left: 16px;
}

.option input {
  appearance: none;
  width: 17px;
  height: 17px;
  margin: 0;
  justify-self: center;
  border: 2px solid #666;
  border-radius: 4px;
  background: linear-gradient(#f3f3f3, #ccc);
}

.option input:checked {
  background: #bbb;
}

.option input:checked::after {
  content: "";
  display: block;
  width: 5px;
  height: 10px;
  margin-left: 4px;
  border: solid #222;
  border-width: 0 2px 2px 0;
  transform: rotate(38deg);
}

.palette-foot {
  display: flex;
  justify-content: flex-end;
  padding: 10px 14px;
  border-top: 1px solid #ccc;
}

.palette-foot button {
  width: 103px;
  height: 25px;
  border: 1px solid #bbb;
  background: #eaeaea;
  font-size: 15px;
  color: #777;
}

.comments {
  position: absolute;
  left: 5px;
  bottom: 5px;
  width: 375px;
  border-top: none;
}

.comments .panel-head {
  padding: 0 1px 0 30px;
}

.navbar {
  position: absolute;
  left: 811px;
  bottom: 4px;
  height: 30px;
  padding: 0 5px 0 4px;
  display: flex;
  align-items: center;
  gap: 8px;
  background: #f1f1f1;
}

.navbar .caret {
  margin-left: 4px;
}

.navbar .plain {
  margin-right: 4px;
}

/* timeline */
.timeline {
  height: 68px;
  display: flex;
  align-items: flex-start;
  border-top: 1px solid #ddd;
  border-bottom: 2px solid #444;
}

.playback {
  width: 178px;
  padding: 22px 24px 0 13px;
  display: flex;
  justify-content: space-between;
}

.history {
  display: flex;
  padding-top: 17px;
}

.history li {
  position: relative;
  width: 30px;
  height: 35px;
  border-bottom: 2px solid #c4c4c4;
}

.history li::after {
  content: "";
  position: absolute;
  left: 14px;
  bottom: 0;
  width: 2px;
  height: 6px;
  background: #c4c4c4;
}

.history li:first-child {
  border-image: linear-gradient(90deg, transparent 50%, #c4c4c4 50%) 2;
}

.history li:last-child {
  border-image: linear-gradient(90deg, #c4c4c4 50%, transparent 50%) 2;
}

.history svg {
  width: 22px;
  height: 24px;
  margin: 0 auto;
}

.marker {
  margin: 12px 0 0 -9px;
}

.settings {
  margin: 21px 17px 0 auto;
}
```
